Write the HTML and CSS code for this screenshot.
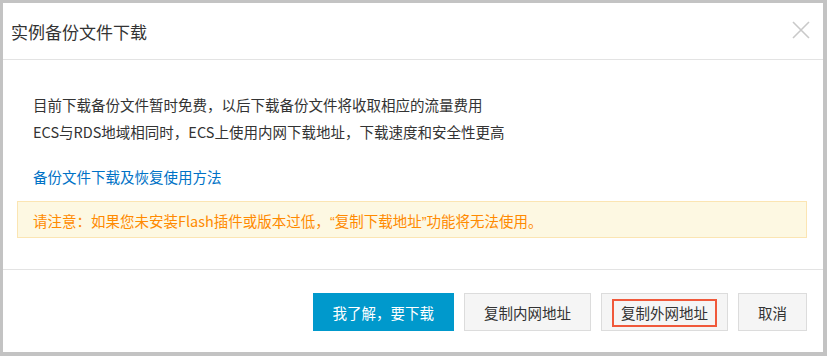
FILE: index.html
```html
<!DOCTYPE html>
<html lang="zh-CN">
<head>
  <meta charset="UTF-8" />
  <title>实例备份文件下载</title>
  <link rel="stylesheet" href="styles.css">
</head>
<body>
  <div class="dialog">
    <div class="dialog-header">
      <h2 class="dialog-title">实例备份文件下载</h2>
      <button class="close-btn" aria-label="关闭">
        <svg width="18" height="18" viewBox="0 0 18 18">
          <path d="M1 1 L17 17 M17 1 L1 17" stroke="#c9c9c9" stroke-width="1.6" fill="none" />
        </svg>
      </button>
    </div>

    <div class="dialog-body">
      <p class="info">目前下载备份文件暂时免费，以后下载备份文件将收取相应的流量费用</p>
      <p class="info">ECS与RDS地域相同时，ECS上使用内网下载地址，下载速度和安全性更高</p>
      <a class="help-link" href="#">备份文件下载及恢复使用方法</a>
      <div class="notice">请注意：如果您未安装Flash插件或版本过低，<span class="q">“</span>复制下载地址<span class="q">”</span>功能将无法使用。</div>
    </div>

    <div class="dialog-footer">
      <button class="btn btn-primary">我了解，要下载</button>
      <button class="btn">复制内网地址</button>
      <button class="btn btn-marked"><span class="mark">复制外网地址</span></button>
      <button class="btn">取消</button>
    </div>
  </div>
</body>
</html>
```

FILE: styles.css
```css
* {
  box-sizing: border-box;
}

body {
  margin: 0;
  padding: 3px 4px 4px 3px;
  background: #c3c3c3;
  font-family: "Noto Sans CJK SC", "Microsoft YaHei", sans-serif;
  color: #333;
}

.dialog {
  background: #fff;
  height: 349px;
}

.dialog-header {
  height: 57px;
  display: flex;
  align-items: center;
  justify-content: space-between;
  padding: 0 13px 0 8px;
  border-bottom: 1px solid #e3e3e3;
}

.dialog-title {
  margin: 0;
  font-size: 17px;
  font-weight: normal;
  color: #333;
}

.close-btn {
  border: none;
  background: none;
  padding: 0;
  width: 18px;
  height: 18px;
  margin-top: -2px;
  cursor: pointer;
}

.close-btn svg {
  display: block;
}

.dialog-body {
  padding: 31px 16px 31px 14px;
}

.info {
  margin: 0;
  padding-left: 16px;
  font-size: 14.5px;
  line-height: 27px;
}

.help-link {
  display: block;
  margin-top: 18px;
  padding-left: 16px;
  font-size: 14.5px;
  line-height: 27px;
  color: #0072c6;
  text-decoration: none;
}

.notice {
  margin-top: 11px;
  height: 37px;
  padding: 0 15px;
  border: 1px solid #fbe5b3;
  background: #fdf8e2;
  color: #ff8a00;
  font-size: 14.5px;
  line-height: 38px;
}

/* half-width quotes as in the original font */
.notice .q {
  font-family: "Liberation Sans", sans-serif;
}

.dialog-footer {
  display: flex;
  justify-content: flex-end;
  gap: 10px;
  padding: 23px 16px 0 0;
  border-top: 1px solid #e3e3e3;
}

.btn {
  height: 38px;
  padding: 0 19px;
  border: 1px solid #dcdcdc;
  background: #f5f5f5;
  color: #333;
  font-family: inherit;
  font-size: 14.5px;
  cursor: pointer;
}

.btn-primary {
  background: #0099cc;
  border-color: #0099cc;
  color: #fff;
}

.btn-marked {
  padding: 0 10px;
}

.mark {
  display: inline-block;
  height: 28px;
  margin-top: 1px;
  padding: 0 7px;
  line-height: 24px;
  border: 2px solid #f0593b;
}
```
